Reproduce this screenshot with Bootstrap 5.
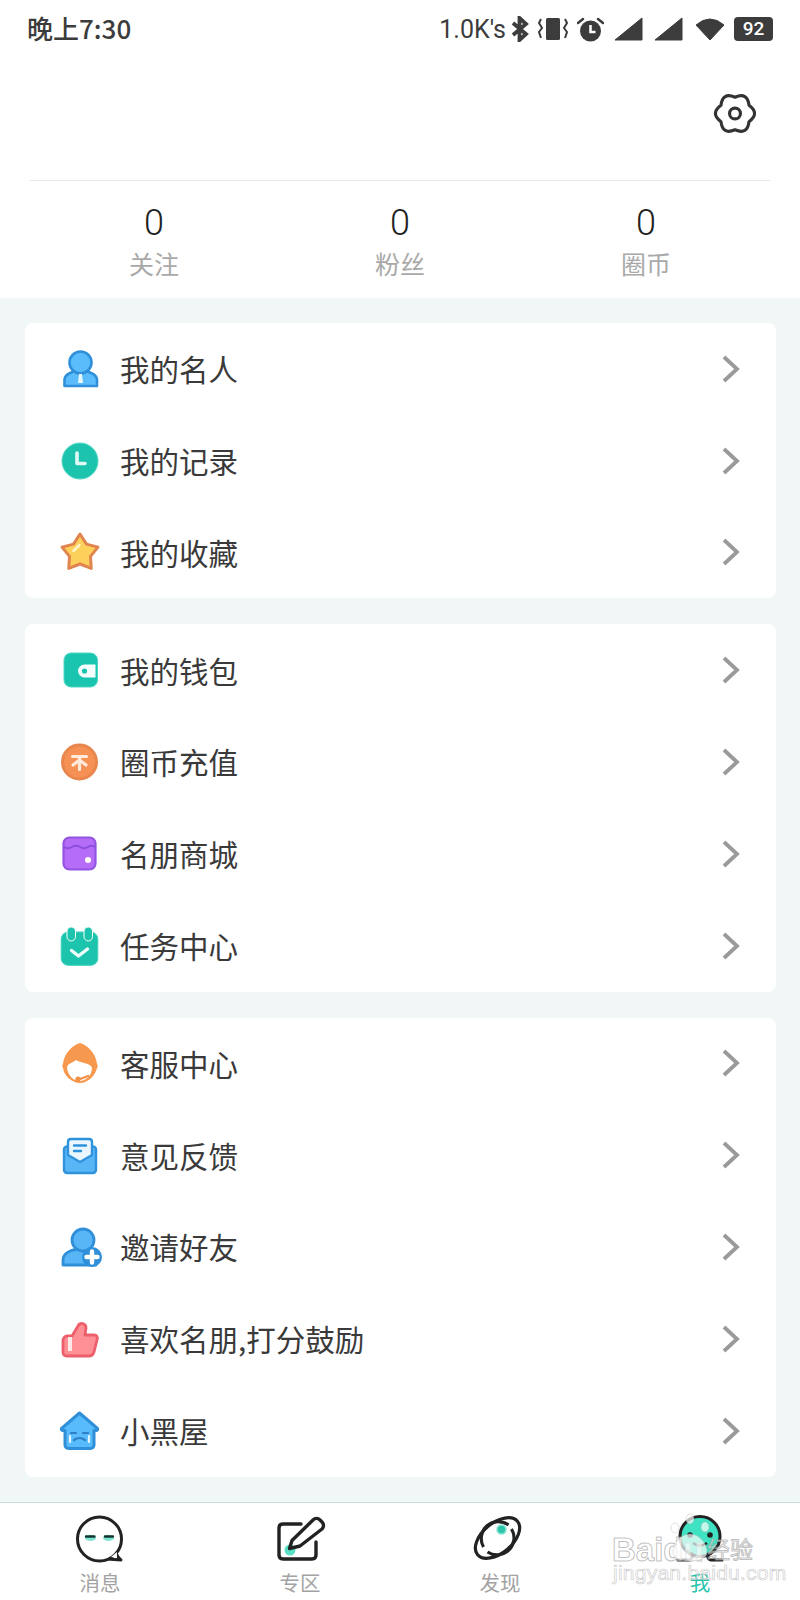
<!DOCTYPE html>
<html lang="zh-CN">
<head>
<meta charset="utf-8">
<title>我</title>
<link href="https://cdn.jsdelivr.net/npm/bootstrap@5.3.0/dist/css/bootstrap.min.css" rel="stylesheet">
<style>
body{background:#f1f6f6;font-family:"Noto Sans CJK SC","Noto Sans",sans-serif;color:#3a3a3a;width:800px;height:1600px;overflow:hidden;position:relative;margin:0}
.page-head{background:#fff;height:298px}
.status-row{height:58px;padding:0 27px;color:#3c3c3c}
.status-time{font-size:26px;font-weight:500;line-height:1;margin-top:-3px}
.status-speed{font-family:"Roboto",sans-serif;font-size:25px;line-height:1;margin-right:4px}
.status-icons svg{display:block}
.batt{width:39px;height:24px;background:#3c3c3c;border-radius:4px;color:#fff;font:500 19px/24px "Roboto",sans-serif;text-align:center}
.gear-row{height:122px;padding:33px 42px 0 0}
.head-rule{margin:0 30px;border-top:1px solid #e8e8e8;height:0}
.stat-cell{width:33.333%;text-align:center}
.stat-wrap{padding:0 31px}
.stat-num{font-family:"Roboto",sans-serif;font-size:36px;font-weight:300;line-height:40px;color:#222;margin-top:22px}
.stat-lab{font-size:25px;line-height:32px;color:#a9a9a9;margin-top:4px}
.menu-card{margin:25px 24px 26px 25px;border:0;border-radius:8px;background:#fff;overflow:hidden}
.menu-card + .menu-card{margin-top:0}
.menu-row{height:91.8px;padding:0 35px 0 35px;border:0;background:transparent;font-size:29.5px;color:#3a3a3a;line-height:1}
.menu-row .glyph{width:40px;height:40px;flex:none;margin-right:20px;display:block;overflow:visible}
.menu-row .chev{margin-left:auto;flex:none}
.tabbar{position:absolute;left:0;right:0;top:1502px;height:98px;background:#fff;border-top:1px solid #cfdcdc}
.tab-cell{width:25%;padding-top:12px;text-align:center}
.tab-cell svg{display:block;margin:0 auto;width:50px;height:50px;overflow:visible}
.tab-lab{font-size:20.5px;line-height:16px;color:#a3a3a3;margin-top:9px}
.tab-lab.on{color:#28c3aa}
.wm-wrap{position:absolute;left:612px;top:1531px;width:150px;height:48px;pointer-events:none}
.wm-main{position:absolute;left:0;top:6px;font:700 33px/26px "Liberation Sans",sans-serif;color:rgba(255,255,255,.5);-webkit-text-stroke:1px rgba(150,150,150,.6);white-space:nowrap}
.wm-cn{position:absolute;left:95px;top:5px;font:400 23px/24px "Noto Sans CJK SC",sans-serif;color:rgba(255,255,255,.55);-webkit-text-stroke:1px rgba(150,150,150,.6);white-space:nowrap}
.wm-url{position:absolute;left:1px;top:37px;font:400 21px/10px "Liberation Sans",sans-serif;color:rgba(255,255,255,.5);-webkit-text-stroke:.7px rgba(150,150,150,.5);white-space:nowrap;letter-spacing:.25px}
.wm-paw{position:absolute;left:54px;top:-20px}
</style>
</head>
<body>
<header class="page-head">
  <div class="status-row d-flex align-items-center justify-content-between">
    <span class="status-time">晚上7:30</span>
    <div class="status-icons d-flex align-items-center">
      <span class="status-speed">1.0K′s</span>
      <svg width="20" height="26" viewBox="0 0 20 26" class="me-2"><path d="M3 7l13 11-6.500 6V2l6.500 6L3 19" fill="none" stroke="#3c3c3c" stroke-width="3.800"/></svg>
      <svg width="30" height="24" viewBox="0 0 30 24" class="me-2"><rect x="8" y="1" width="14" height="22" rx="1.500" fill="#3c3c3c"/><path d="M3 2l-2 4 3 5-3 4 2 6M27 2l2 4-3 5 3 4-2 6" fill="none" stroke="#3c3c3c" stroke-width="2"/></svg>
      <svg width="27" height="25" viewBox="0 0 27 25" class="me-2" style="margin-left:1px"><circle cx="13.500" cy="14" r="10.500" fill="#3c3c3c"/><path d="M13.500 8v7h5" fill="none" stroke="#fff" stroke-width="2.500"/><path d="M1 6l5-4M26 6l-5-4" stroke="#3c3c3c" stroke-width="2.500" stroke-linecap="round"/></svg>
      <svg width="29" height="24" viewBox="0 0 29 24" style="margin:0 11px 0 2px"><path d="M1 23L28 1v22z" fill="#3c3c3c" stroke="#3c3c3c" stroke-linejoin="round"/></svg>
      <svg width="29" height="24" viewBox="0 0 29 24" style="margin-right:12px"><path d="M1 23L28 1v22z" fill="#3c3c3c" stroke="#3c3c3c" stroke-linejoin="round"/></svg>
      <svg width="30" height="24" viewBox="0 0 30 24" style="margin-right:9px"><path d="M1 8Q15-4 29 8L15 23z" fill="#3c3c3c" stroke="#3c3c3c" stroke-linejoin="round"/></svg>
      <span class="batt">92</span>
    </div>
  </div>
  <div class="gear-row d-flex justify-content-end align-items-start">
    <svg width="46" height="45" viewBox="0 0 44 42"><path d="M22 5.500Q34 .2 35.400 13.200Q46 21 35.400 28.800Q34 41.800 22 36.500Q10 41.800 8.600 28.800Q-2 21 8.600 13.200Q10 .2 22 5.500z" fill="none" stroke="#333" stroke-width="3" stroke-linejoin="round"/><circle cx="22" cy="21" r="5.200" fill="none" stroke="#333" stroke-width="3"/></svg>
  </div>
  <div class="head-rule"></div>
  <div class="d-flex stat-wrap">
    <div class="stat-cell"><div class="stat-num">0</div><div class="stat-lab">关注</div></div>
    <div class="stat-cell"><div class="stat-num">0</div><div class="stat-lab">粉丝</div></div>
    <div class="stat-cell"><div class="stat-num">0</div><div class="stat-lab">圈币</div></div>
  </div>
</header>

<svg width="0" height="0" class="position-absolute"><defs>
  <symbol id="chevron" viewBox="0 0 20 30"><path d="M3 3l13 12L3 27" fill="none" stroke="#9a9a9a" stroke-width="3.800"/></symbol>
</defs></svg>

<div class="card menu-card">
  <ul class="list-group list-group-flush">
    <li class="list-group-item menu-row d-flex align-items-center">
      <svg class="glyph" viewBox="0 0 40 40"><path d="M4.500 37v-6c0-5 6-9 16-9s16.500 4 16.500 9v6z" fill="#5bbcfc" stroke="#2f8fd8" stroke-width="2.600" stroke-linejoin="round"/><circle cx="20.500" cy="13.500" r="11" fill="#5bbcfc" stroke="#2f8fd8" stroke-width="2.600"/><path d="M19 25h3l1 9h-5z" fill="#e8f6ff"/></svg>
      <span>我的名人</span>
      <svg class="chev" width="20" height="30"><use href="#chevron"/></svg>
    </li>
    <li class="list-group-item menu-row d-flex align-items-center">
      <svg class="glyph" viewBox="0 0 40 40"><circle cx="20" cy="20" r="18" fill="#1cc4ad" stroke="#54d8c6" stroke-width="1"/><path d="M17 12v10.500h8" fill="none" stroke="#dffaf5" stroke-width="3.600" stroke-linecap="round" stroke-linejoin="round"/></svg>
      <span>我的记录</span>
      <svg class="chev" width="20" height="30"><use href="#chevron"/></svg>
    </li>
    <li class="list-group-item menu-row d-flex align-items-center">
      <svg class="glyph" viewBox="0 0 40 40"><path d="M20 2l6.500 10.100L38 15.100 30.500 24.400 31.200 36.400 20 32 8.800 36.400 9.500 24.400 2 15.100 13.500 12.100z" fill="#fcd05a" stroke="#e08450" stroke-width="3" stroke-linejoin="round"/><path d="M13.500 19l6-6" stroke="#fff3c8" stroke-width="2.600" stroke-linecap="round"/></svg>
      <span>我的收藏</span>
      <svg class="chev" width="20" height="30"><use href="#chevron"/></svg>
    </li>
  </ul>
</div>

<div class="card menu-card">
  <ul class="list-group list-group-flush">
    <li class="list-group-item menu-row d-flex align-items-center">
      <svg class="glyph" viewBox="0 0 40 40"><rect x="4" y="3" width="33.500" height="34" rx="7" fill="#19c5ae" stroke="#4fd8c4" stroke-width="1"/><path d="M35.500 14.500H24.500a6.500 6.500 0 0 0 0 13H35.500z" fill="#f4fffd"/><circle cx="24.500" cy="21" r="2.600" fill="#19c5ae"/></svg>
      <span>我的钱包</span>
      <svg class="chev" width="20" height="30"><use href="#chevron"/></svg>
    </li>
    <li class="list-group-item menu-row d-flex align-items-center">
      <svg class="glyph" viewBox="0 0 40 40"><circle cx="19.500" cy="20" r="17" fill="#f69155" stroke="#e8864d" stroke-width="3"/><path d="M12.500 14.500h14M19.500 14.500v13M19.500 18l-6.500 5M19.500 18l6.500 5" fill="none" stroke="#ffeadb" stroke-width="3.200" stroke-linecap="round"/></svg>
      <span>圈币充值</span>
      <svg class="chev" width="20" height="30"><use href="#chevron"/></svg>
    </li>
    <li class="list-group-item menu-row d-flex align-items-center">
      <svg class="glyph" viewBox="0 0 40 40"><rect x="3.500" y="3.500" width="32" height="32" rx="6" fill="#b56cf7" stroke="#9354e2" stroke-width="2.200"/><path d="M4 13q4 2.500 8 0t8 0 8 0 7 0" fill="none" stroke="#8d4ede" stroke-width="2"/><circle cx="28" cy="26" r="3" fill="#fff"/></svg>
      <span>名朋商城</span>
      <svg class="chev" width="20" height="30"><use href="#chevron"/></svg>
    </li>
    <li class="list-group-item menu-row d-flex align-items-center">
      <svg class="glyph" viewBox="0 0 40 40"><rect x="1.200" y="6" width="36.600" height="33.300" rx="7" fill="#1cc4ad" stroke="#3ed2bd" stroke-width="1"/><rect x="7" y="1" width="8.500" height="14" rx="4.250" fill="#1cc4ad" stroke="#fff" stroke-width="1"/><rect x="24" y="1" width="8.500" height="14" rx="4.250" fill="#1cc4ad" stroke="#fff" stroke-width="1"/><path d="M11.500 24.500l7 5.500 9-7" fill="none" stroke="#effdfa" stroke-width="3.400" stroke-linecap="round" stroke-linejoin="round"/></svg>
      <span>任务中心</span>
      <svg class="chev" width="20" height="30"><use href="#chevron"/></svg>
    </li>
  </ul>
</div>

<div class="card menu-card">
  <ul class="list-group list-group-flush">
    <li class="list-group-item menu-row d-flex align-items-center">
      <svg class="glyph" viewBox="0 0 40 40"><path d="M20 0C27 2 36 10 37 21C38 22 38 24 37 25C35 33 28 40 20 40C12 40 4 33 3 25C2 24 2 22 3 21C4 10 13 2 20 0z" fill="#f6994f"/><path d="M7 24C8 20 13 20 16 17C20 20 31 20 32 25C32 32 26 38 19.500 38C13 38 7 31 7 24z" fill="#fff"/><path d="M28 33l-9 3.500" stroke="#f0914a" stroke-width="2.400" stroke-linecap="round"/><circle cx="18" cy="36" r="2.600" fill="#f0914a"/></svg>
      <span>客服中心</span>
      <svg class="chev" width="20" height="30"><use href="#chevron"/></svg>
    </li>
    <li class="list-group-item menu-row d-flex align-items-center">
      <svg class="glyph" viewBox="0 0 40 40"><rect x="4" y="11.500" width="32" height="26.500" rx="3" fill="#58b6f7" stroke="#2f93dc" stroke-width="2.400"/><path d="M8 20V7c0-2 1-3 3-3h18c2 0 3 1 3 3v13l-12 7z" fill="#eaf6ff" stroke="#2f93dc" stroke-width="2.400" stroke-linejoin="round"/><path d="M14 10.500h12M14 16h7" stroke="#2f93dc" stroke-width="2.400" stroke-linecap="round"/></svg>
      <span>意见反馈</span>
      <svg class="chev" width="20" height="30"><use href="#chevron"/></svg>
    </li>
    <li class="list-group-item menu-row d-flex align-items-center">
      <svg class="glyph" viewBox="0 0 40 40"><path d="M3 38v-5c0-7 8-11 19-11s14 8 14 16z" fill="#58b6f7" stroke="#2f8fd8" stroke-width="2.800" stroke-linejoin="round"/><circle cx="23" cy="13" r="11" fill="#58b6f7" stroke="#2f8fd8" stroke-width="2.800"/><circle cx="32" cy="30" r="10" fill="#2f8fd8"/><path d="M32 24.500v11M26.500 30h11" stroke="#fff" stroke-width="4.400" stroke-linecap="round"/></svg>
      <span>邀请好友</span>
      <svg class="chev" width="20" height="30"><use href="#chevron"/></svg>
    </li>
    <li class="list-group-item menu-row d-flex align-items-center">
      <svg class="glyph" viewBox="0 0 40 40"><path d="M3 22c0-3 2-5 4-5h5l6-10c2-4 8-3 8 2l-1 7h9c3 0 4 2 3 5l-3 12c-1 3-2 4-5 4H7c-3 0-4-1-4-4z" fill="#fe8f95" stroke="#ee5f6c" stroke-width="2.800" stroke-linejoin="round"/><rect x="8" y="18" width="4" height="14" fill="#ffeaea"/></svg>
      <span>喜欢名朋,打分鼓励</span>
      <svg class="chev" width="20" height="30"><use href="#chevron"/></svg>
    </li>
    <li class="list-group-item menu-row d-flex align-items-center">
      <svg class="glyph" viewBox="0 0 40 40"><path d="M19.500 2L37.500 17.500c.600 1-.200 2-1.500 2H34V34c0 2-1.500 3.500-3.500 3.500h-22C6.500 37.500 5 36 5 34V19.500H3c-1.300 0-2.100-1-1.500-2z" fill="#58bcfc" stroke="#2f8fd8" stroke-width="3" stroke-linejoin="round"/><path d="M11 22h5M23 22h5M14 29q5.500-4 11 0" fill="none" stroke="#2f7fc4" stroke-width="2.200" stroke-linecap="round"/><path d="M10 25v6M29 25v6" stroke="#e4f5ff" stroke-width="2.200" stroke-linecap="round"/></svg>
      <span>小黑屋</span>
      <svg class="chev" width="20" height="30"><use href="#chevron"/></svg>
    </li>
  </ul>
</div>

<nav class="tabbar d-flex">
  <div class="tab-cell">
    <svg viewBox="0 0 50 50"><path d="M32 44l14 1c-3-2-4-4-5-7" fill="#fff" stroke="#222" stroke-width="3" stroke-linejoin="round"/><circle cx="24.500" cy="24" r="22" fill="#fff" stroke="#222" stroke-width="3"/><path d="M36 42l6-5v6z" fill="#fff"/><ellipse cx="15.500" cy="23" rx="5.500" ry="3" fill="#7fe4d2"/><ellipse cx="33.500" cy="23" rx="5.500" ry="3" fill="#7fe4d2"/><path d="M11 21.500h8.500M30 21.500h8" stroke="#12362f" stroke-width="2.400" stroke-linecap="round"/></svg>
    <div class="tab-lab">消息</div>
  </div>
  <div class="tab-cell">
    <svg viewBox="0 0 50 50"><path d="M26 9H8C5.500 9 4 10.500 4 13v27c0 2.500 1.500 4 4 4h29c2.500 0 4-1.500 4-4V27" fill="none" stroke="#222" stroke-width="3.400" stroke-linecap="round"/><circle cx="15" cy="35" r="5.500" fill="#59dfc6"/><path d="M14.500 33.500l2.500-8L38 5c2-2 5-2 7 0l2 2c2 2 2 5 0 7L25 31z" fill="#fff" fill-opacity="0" stroke="#222" stroke-width="3.400" stroke-linejoin="round"/></svg>
    <div class="tab-lab">专区</div>
  </div>
  <div class="tab-cell">
    <svg viewBox="0 0 50 50"><g transform="translate(-2.500 -2)"><ellipse cx="25" cy="25" rx="26" ry="15" transform="rotate(-40 25 25)" fill="none" stroke="#222" stroke-width="3.200"/><path d="M11 34A17 17 0 0 1 36 12M39 16A17 17 0 0 1 15 39" fill="none" stroke="#222" stroke-width="3.200"/><circle cx="29" cy="16.500" r="4.500" fill="#2cc5ab" stroke="#8ae5d5" stroke-width="1.600"/></g></svg>
    <div class="tab-lab">发现</div>
  </div>
  <div class="tab-cell">
    <svg viewBox="0 0 50 50"><circle cx="25" cy="21.500" r="20" fill="#3fe2c2" stroke="#222" stroke-width="3"/><circle cx="15" cy="20" r="2.800" fill="#222"/><circle cx="35" cy="20" r="2.800" fill="#222"/><path d="M18 28q7 5 14 0" fill="none" stroke="#222" stroke-width="2.400"/><path d="M3 45h11q4-1 3-6M47 45H36q-4-1-3-6" fill="none" stroke="#222" stroke-width="3" stroke-linecap="round"/></svg>
    <div class="tab-lab on">我</div>
  </div>
</nav>

<div class="wm-wrap">
  <div class="wm-main">Baidu</div>
  <svg class="wm-paw" width="50" height="52" viewBox="0 0 50 52"><g fill="rgba(255,255,255,.68)" stroke="rgba(170,170,170,.35)"><ellipse cx="24" cy="8" rx="4" ry="5"/><ellipse cx="9" cy="17" rx="4" ry="5"/><ellipse cx="39" cy="16" rx="4" ry="5"/><path d="M24 23c9 0 17 9 17 18 0 7-8 9-17 9S7 48 7 41c0-9 8-18 17-18z"/></g></svg>
  <div class="wm-cn">经验</div>
  <div class="wm-url">jingyan.baidu.com</div>
</div>
</body>
</html>
